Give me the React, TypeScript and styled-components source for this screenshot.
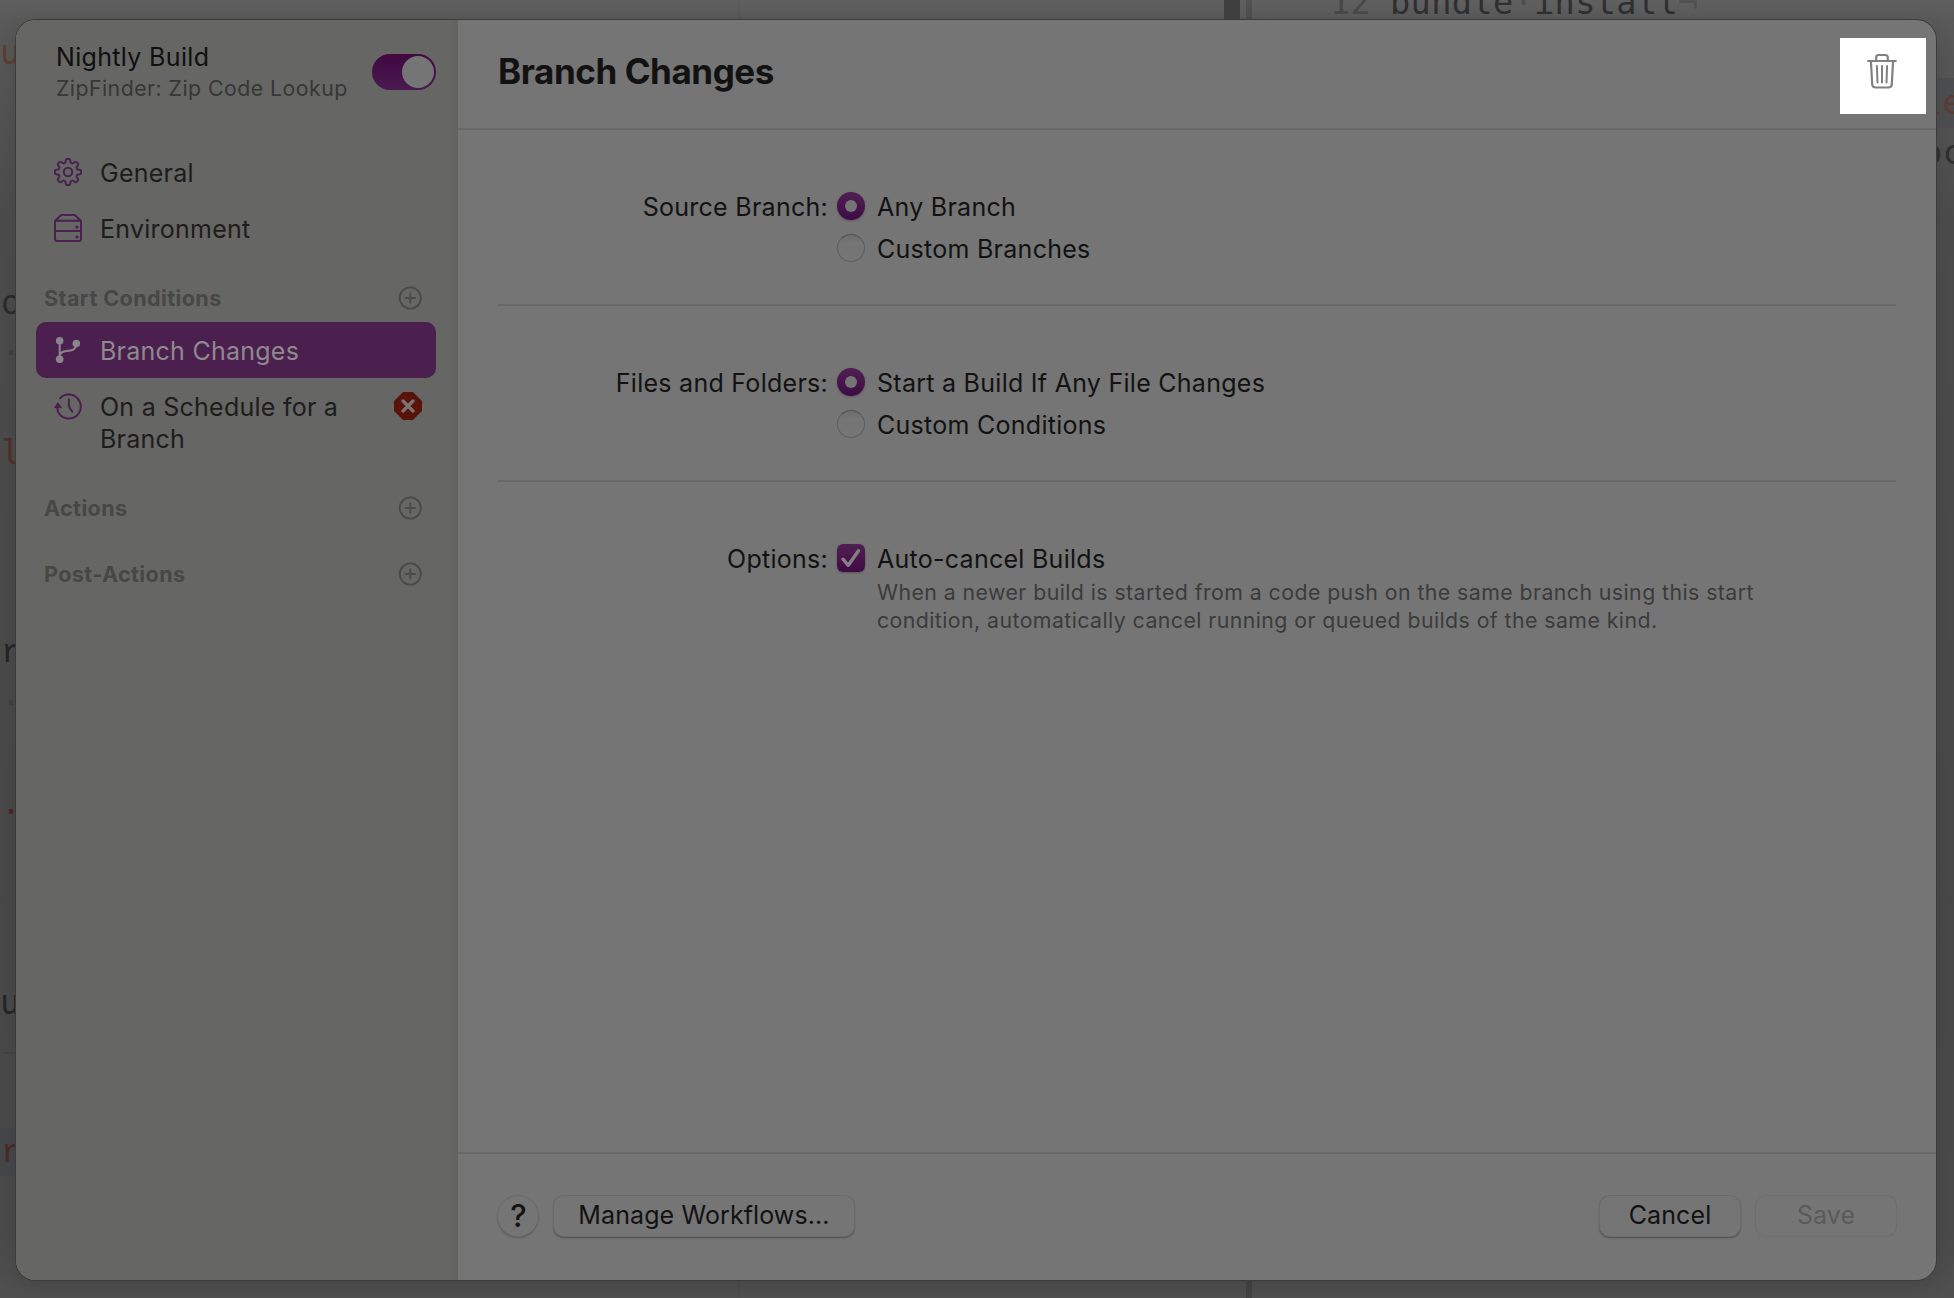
import React from "react";
import styled, { createGlobalStyle, css } from "styled-components";

const GlobalStyle = createGlobalStyle`
  * { box-sizing: border-box; }
  body { margin: 0; background: #555; }
  button { font: inherit; border: 0; padding: 0; background: none; }
`;

const sans = `Inter, "Liberation Sans", sans-serif`;

const Screen = styled.div`
  position: relative;
  width: 1954px;
  height: 1298px;
  overflow: hidden;
  padding: 20px 18px 18px 16px;
  font-family: ${sans};
  background: linear-gradient(180deg, #606060 0, #595959 20px, #4c4c4c 220px, #484848 900px, #4a4a4a 1230px, #505050 1298px);
`;

const Strip = styled.div<{ $x: number; $y: number; $w: number; $h: number; $color: string }>`
  position: absolute;
  left: ${(p) => p.$x}px;
  top: ${(p) => p.$y}px;
  width: ${(p) => p.$w}px;
  height: ${(p) => p.$h}px;
  background: ${(p) => p.$color};
`;

const Code = styled.span<{ $x: number; $base: number; $color: string; $slab?: boolean }>`
  position: absolute;
  left: ${(p) => p.$x}px;
  top: ${(p) => p.$base - 32}px;
  font-family: ${(p) => (p.$slab ? `"Liberation Mono"` : `"DejaVu Sans Mono"`)}, monospace;
  font-size: 33.6px;
  line-height: 40px;
  letter-spacing: 0.36px;
  white-space: pre;
  color: ${(p) => p.$color};
`;

const Faint = styled.span`
  color: #505050;
`;

const Dialog = styled.main`
  position: relative;
  display: flex;
  height: 1260px;
  border-radius: 20px;
  overflow: hidden;
  background: #757575;
`;

const DialogShadow = styled.div`
  height: 1260px;
  position: relative;
  border-radius: 20px;
  box-shadow: 0 0 0 1px #3b3b3b, 0 6px 20px rgba(0, 0, 0, 0.12);
`;

const Sidebar = styled.aside`
  width: 442px;
  flex: none;
  padding: 0 22px 0 20px;
  background: linear-gradient(90deg, #666664 0, #666664 434px, #636361 442px);
`;

const WorkflowHead = styled.header`
  display: flex;
  justify-content: space-between;
  height: 124px;
  padding: 21px 0 0 20px;
`;

const WorkflowName = styled.div`
  font-size: 25px;
  line-height: 32px;
  letter-spacing: 0.33px;
  color: #101010;
`;

const WorkflowApp = styled.div`
  margin-top: 1px;
  font-size: 21.3px;
  line-height: 28px;
  letter-spacing: 0.46px;
  color: #373737;
  white-space: nowrap;
`;

const Toggle = styled.button`
  width: 64px;
  height: 36px;
  margin-top: 13px;
  padding: 2px;
  display: flex;
  justify-content: flex-end;
  border-radius: 18px;
  background: linear-gradient(180deg, #43093f 0, #430c48 30%, #4b1b50 100%);
`;

const Knob = styled.span`
  width: 32px;
  height: 32px;
  border-radius: 50%;
  background: #757575;
`;

const Item = styled.a<{ $active?: boolean }>`
  display: flex;
  align-items: flex-start;
  min-height: 56px;
  padding: 13px 14px 11px 18px;
  border-radius: 10px;
  font-size: 25px;
  line-height: 32px;
  letter-spacing: 0.25px;
  color: ${(p) => (p.$active ? "#8e8a8e" : "#1d1d1c")};
  ${(p) => p.$active && css`background: #4b204f;`}
`;

const ItemIcon = styled.span`
  display: flex;
  flex: none;
  width: 28px;
  height: 28px;
  margin: 1px 18px 0 0;
  color: #4c1f51;
`;

const ItemText = styled.span`
  flex: 1;
`;

const BadgeSlot = styled.span`
  display: flex;
  flex: none;
  margin-top: 1px;
`;

const Group = styled.div`
  display: flex;
  justify-content: space-between;
  height: 66px;
  padding: 28px 14px 0 8px;
  font-size: 21.6px;
  font-weight: 700;
  line-height: 28px;
  letter-spacing: 0.38px;
  color: #474746;
  svg { margin-top: 2px; }
`;

const Pane = styled.section`
  flex: 1;
  display: flex;
  flex-direction: column;
`;

const PaneHead = styled.header`
  display: flex;
  justify-content: space-between;
  height: 110px;
  padding: 0 10px 0 40px;
  border-bottom: 2px solid #696969;
`;

const Title = styled.h1`
  margin: 29px 0 0;
  font-size: 35px;
  line-height: 44px;
  font-weight: 700;
  letter-spacing: -0.44px;
  color: #121212;
`;

const TrashButton = styled.button`
  display: flex;
  justify-content: center;
  width: 86px;
  height: 76px;
  margin-top: 18px;
  padding: 15px 2px 0 0;
  background: #fff;
`;

const Form = styled.div`
  flex: 1;
  padding: 0 40px;
`;

const Field = styled.div<{ $last?: boolean }>`
  display: grid;
  grid-template-columns: 331px 1fr;
  column-gap: 8px;
  padding: 56px 0 34px;
  border-bottom: ${(p) => (p.$last ? "0" : "2px solid #696969")};
  font-size: 25px;
  line-height: 42px;
  letter-spacing: 0.27px;
  color: #121212;
`;

const FieldLabel = styled.div`
  padding-right: 1px;
  text-align: right;
`;

const Choice = styled.label`
  display: flex;
  height: 42px;
  gap: 12px;
`;

const control = css`
  flex: none;
  display: flex;
  align-items: center;
  justify-content: center;
  width: 28px;
  height: 28px;
  margin-top: 6px;
`;

const Radio = styled.span<{ $on?: boolean }>`
  ${control}
  border-radius: 50%;
  ${(p) =>
    p.$on
      ? css`
          background: linear-gradient(180deg, #4f2053, #3f0a44);
          box-shadow: 0 1px 2px rgba(60, 20, 60, 0.4);
          &::after {
            content: "";
            width: 12px;
            height: 12px;
            border-radius: 50%;
            background: #757575;
          }
        `
      : css`
          border: 1px solid #5e5e5e;
          border-top-color: #525252;
          background: linear-gradient(180deg, #6d6d6d, #757575 30%);
        `}
`;

const Checkbox = styled.span`
  ${control}
  border-radius: 6px;
  background: linear-gradient(180deg, #4f2053, #3f0a44);
  box-shadow: 0 1px 2px rgba(60, 20, 60, 0.4);
`;

const Hint = styled.p`
  margin: -2px 0 0 40px;
  width: 900px;
  font-size: 21.3px;
  line-height: 28px;
  letter-spacing: 0.43px;
  color: #3b3b3b;
`;

const PaneFoot = styled.footer`
  display: flex;
  align-items: flex-start;
  height: 128px;
  padding: 42px 40px 0;
  border-top: 2px solid #696969;
`;

const Push = styled.button<{ $w: number; $disabled?: boolean }>`
  width: ${(p) => p.$w}px;
  height: 40px;
  padding-bottom: 2px;
  border-radius: 10px;
  font-size: 25px;
  line-height: 38px;
  letter-spacing: 0.1px;
  background: #757575;
  color: ${(p) => (p.$disabled ? "#5a5a5a" : "#121212")};
  box-shadow: ${(p) =>
    p.$disabled
      ? "0 0 0 1px #6e6e6e, 0 1px 1px #6c6c6c"
      : "0 0 0 1px #6b6b6b, 0 1px 1px 0.5px #565656, 0 2px 3px rgba(0,0,0,0.12)"};
`;

const Help = styled(Push)`
  margin-right: 16px;
  padding: 0 0 0 1px;
  border-radius: 50%;
  font-size: 31px;
  font-weight: 500;
  line-height: 40px;
`;

const Trailing = styled.div`
  display: flex;
  gap: 16px;
  margin-left: auto;
`;

const gearPath = (() => {
  const pts: string[] = [];
  const pt = (r: number, deg: number) => {
    const a = (deg * Math.PI) / 180;
    return `${(14 + r * Math.sin(a)).toFixed(2)} ${(14 - r * Math.cos(a)).toFixed(2)}`;
  };
  for (let i = 0; i < 8; i++) {
    const c = i * 45;
    pts.push(`${i === 0 ? "M" : "L"}${pt(10.1, c - 14)}`);
    pts.push(`Q${pt(11.2, c - 12)} ${pt(11.9, c - 10.5)}`);
    pts.push(`Q${pt(13.1, c - 9)} ${pt(13.1, c - 4)}`);
    pts.push(`L${pt(13.1, c + 4)}`);
    pts.push(`Q${pt(13.1, c + 9)} ${pt(11.9, c + 10.5)}`);
    pts.push(`Q${pt(11.2, c + 12)} ${pt(10.1, c + 14)}`);
    pts.push(`Q${pt(8.9, c + 22.5)} ${pt(10.1, c + 31)}`);
  }
  return pts.join("") + "Z";
})();

const Gear = () => (
  <svg width="28" height="28" viewBox="0 0 28 28" fill="none" stroke="currentColor" strokeWidth="2" strokeLinejoin="round">
    <path d={gearPath} />
    <circle cx="14" cy="14" r="4.2" />
  </svg>
);

const Drive = () => (
  <svg width="28" height="28" viewBox="0 0 28 28" fill="none" stroke="currentColor" strokeWidth="2" strokeLinejoin="round">
    <path d="M1 6.8V25a2 2 0 0 0 2 2h22a2 2 0 0 0 2-2V6.8M1 6.8h26M1 17h26M1 6.8L6.2 1.9Q7 1 8.4 1h11.2Q21 1 21.8 1.9L27 6.8" />
    <circle cx="23" cy="13" r="1.6" fill="currentColor" stroke="none" />
    <circle cx="23" cy="23" r="1.6" fill="currentColor" stroke="none" />
  </svg>
);

const Branch = () => (
  <svg width="28" height="28" viewBox="0 0 28 28" fill="none" stroke="#8a858a" strokeWidth="2">
    <path d="M5.7 5v19M5.7 20.5C6 16.5 8.5 15.2 12.5 15C18 14.7 21.8 14 22.3 7.5" />
    <g fill="#8a858a" stroke="none">
      <circle cx="5.7" cy="4.7" r="3.8" />
      <circle cx="5.7" cy="23.3" r="3.8" />
      <circle cx="22.3" cy="7.5" r="3.8" />
    </g>
  </svg>
);

const Clock = () => (
  <svg width="28" height="28" viewBox="0 0 28 28" fill="none" stroke="currentColor" strokeWidth="2" strokeLinecap="round">
    <path d="M6.2 6.2A12 12 0 1 1 5 21.5Q3.5 19.3 3.3 16" />
    <path d="M14.9 7.2V13.5Q14.9 14.6 15.5 15.6L18.3 19.6" />
    <path d="M0.8 15.3L4 10.8L7.2 15.3Z" fill="currentColor" strokeWidth="1" strokeLinejoin="round" />
  </svg>
);

const Plus = () => (
  <svg width="24" height="24" viewBox="0 0 24 24" fill="none" stroke="#4a4a49" strokeWidth="1.8" strokeLinecap="round">
    <circle cx="12.3" cy="12" r="10.6" />
    <path d="M12.3 7.2v9.6M7.5 12h9.6" />
  </svg>
);

const ErrorBadge = () => (
  <svg width="28" height="28" viewBox="0 0 28 28">
    <path d="M9.5 1h9L27 9.5v9L18.5 27h-9L1 18.5v-9Z" fill="#58130b" stroke="#58130b" strokeWidth="2" strokeLinejoin="round" />
    <path d="M9 9l10 10M19 9L9 19" stroke="#7c7271" strokeWidth="3.4" strokeLinecap="round" />
  </svg>
);

const Trash = () => (
  <svg width="30" height="36" viewBox="0 0 30 36" fill="none" stroke="#808080" strokeWidth="2.2" strokeLinecap="round" strokeLinejoin="round">
    <path d="M1.2 8H28.8M9.2 8V4.5Q9.2 2 11.7 2H18.3Q20.8 2 20.8 4.5V8" />
    <path d="M3.9 8L5.2 31.2Q5.4 34.5 8.7 34.5H21.3Q24.600 34.5 24.8 31.2L26.1 8" />
    <path d="M9.9 13l.6 16.5M15 13v16.5M20.1 13l-.6 16.5" strokeWidth="2" />
  </svg>
);

const Check = () => (
  <svg width="28" height="28" viewBox="0 0 28 28" fill="none" stroke="#858085" strokeWidth="3.4" strokeLinecap="round" strokeLinejoin="round">
    <path d="M6 15.2L11.3 21.3L21.5 6.8" />
  </svg>
);

const options = [
  { label: "Source Branch:", choices: ["Any Branch", "Custom Branches"] },
  { label: "Files and Folders:", choices: ["Start a Build If Any File Changes", "Custom Conditions"] },
];

export default function App() {
  return (
    <Screen>
      <GlobalStyle />
      <Strip $x={738} $y={0} $w={2} $h={1298} $color="rgba(0,0,0,0.04)" />
      <Strip $x={1224} $y={0} $w={16} $h={20} $color="#404040" />
      <Strip $x={1246} $y={0} $w={6} $h={1298} $color="rgba(0,0,0,0.14)" />
      <Strip $x={1936} $y={78} $w={18} $h={50} $color="#4c4e50" />
      <Strip $x={0} $y={1128} $w={16} $h={48} $color="#444648" />
      <Strip $x={2} $y={1052} $w={14} $h={2} $color="#434343" />
      <Code $x={1330} $base={15} $color="#484848">12</Code>
      <Code $x={1390} $base={15} $color="#2f2f2f">bundle<Faint>·</Faint>install<Faint>¬</Faint></Code>
      <Code $x={0} $base={65} $color="#5f3b33">u</Code>
      <Code $x={1} $base={315} $color="#2b2b2b">o</Code>
      <Code $x={1} $base={365} $color="#424242">·</Code>
      <Code $x={1} $base={465} $color="#52302a">l</Code>
      <Code $x={1} $base={665} $color="#252525" $slab>r</Code>
      <Code $x={1} $base={715} $color="#424242">·</Code>
      <Code $x={1} $base={815} $color="#4b2925">.</Code>
      <Code $x={0} $base={1015} $color="#252525">u</Code>
      <Code $x={1} $base={1165} $color="#4b2925" $slab>r</Code>
      <Code $x={1922} $base={115} $color="#5f3b33">le</Code>
      <Code $x={1922} $base={165} $color="#303030">oc</Code>
      <DialogShadow>
        <Dialog>
          <Sidebar>
            <WorkflowHead>
              <div>
                <WorkflowName>Nightly Build</WorkflowName>
                <WorkflowApp>ZipFinder: Zip Code Lookup</WorkflowApp>
              </div>
              <Toggle><Knob /></Toggle>
            </WorkflowHead>
            <Item><ItemIcon><Gear /></ItemIcon><ItemText>General</ItemText></Item>
            <Item><ItemIcon><Drive /></ItemIcon><ItemText>Environment</ItemText></Item>
            <Group>Start Conditions<Plus /></Group>
            <Item $active><ItemIcon><Branch /></ItemIcon><ItemText>Branch Changes</ItemText></Item>
            <Item>
              <ItemIcon><Clock /></ItemIcon>
              <ItemText>On a Schedule for a<br />Branch</ItemText>
              <BadgeSlot><ErrorBadge /></BadgeSlot>
            </Item>
            <Group>Actions<Plus /></Group>
            <Group>Post-Actions<Plus /></Group>
          </Sidebar>
          <Pane>
            <PaneHead>
              <Title>Branch Changes</Title>
              <TrashButton><Trash /></TrashButton>
            </PaneHead>
            <Form>
              {options.map((o) => (
                <Field key={o.label}>
                  <FieldLabel>{o.label}</FieldLabel>
                  <div>
                    {o.choices.map((c, i) => (
                      <Choice key={c}><Radio $on={i === 0} />{c}</Choice>
                    ))}
                  </div>
                </Field>
              ))}
              <Field $last>
                <FieldLabel>Options:</FieldLabel>
                <div>
                  <Choice><Checkbox><Check /></Checkbox>Auto-cancel Builds</Choice>
                  <Hint>
                    When a newer build is started from a code push on the same branch using this start<br />
                    condition, automatically cancel running or queued builds of the same kind.
                  </Hint>
                </div>
              </Field>
            </Form>
            <PaneFoot>
              <Help $w={40}>?</Help>
              <Push $w={300}>Manage Workflows...</Push>
              <Trailing>
                <Push $w={140}>Cancel</Push>
                <Push $w={140} $disabled>Save</Push>
              </Trailing>
            </PaneFoot>
          </Pane>
        </Dialog>
      </DialogShadow>
    </Screen>
  );
}
